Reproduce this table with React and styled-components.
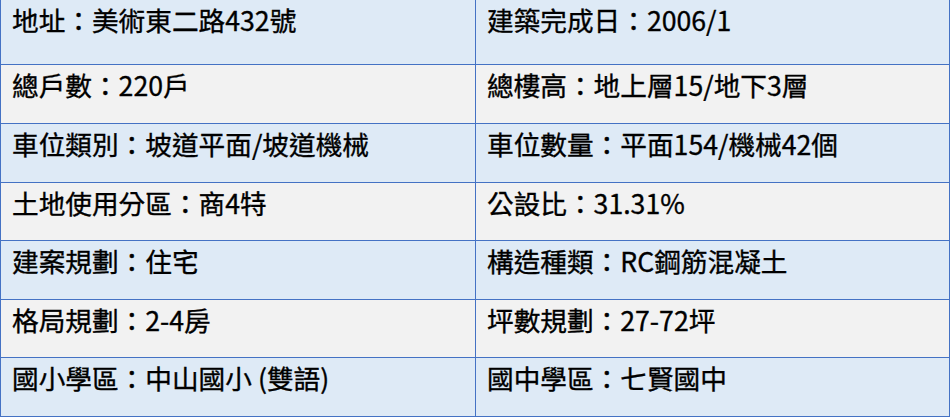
import styled, { createGlobalStyle } from "styled-components";

const GlobalStyle = createGlobalStyle`
    html, body {
        margin: 0;
        padding: 0;
        background: #ffffff;
    }
    body {
        font-family: "Noto Sans CJK TC", "Noto Sans", sans-serif;
    }
`;

const rows = [
    { h: 64, left: "地址：美術東二路432號", right: "建築完成日：2006/1" },
    { h: 58, left: "總戶數：220戶", right: "總樓高：地上層15/地下3層" },
    { h: 58, left: "車位類別：坡道平面/坡道機械", right: "車位數量：平面154/機械42個" },
    { h: 57, left: "土地使用分區：商4特", right: "公設比：31.31%" },
    { h: 58, left: "建案規劃：住宅", right: "構造種類：RC鋼筋混凝土" },
    { h: 57, left: "格局規劃：2-4房", right: "坪數規劃：27-72坪" },
    { h: 58, left: "國小學區：中山國小 (雙語)", right: "國中學區：七賢國中" },
];

export default function App() {
    return (
        <>
            <GlobalStyle />
            <Table>
                {rows.map((row, i) => (
                    <Row key={i} $h={row.h} $alt={i % 2 === 1}>
                        <Cell $divider>{row.left}</Cell>
                        <Cell>{row.right}</Cell>
                    </Row>
                ))}
            </Table>
        </>
    );
}

const Table = styled.div`
    width: 950px;
    box-sizing: border-box;
    border-left: 1px solid #4472c4;
    border-right: 1px solid #4472c4;
    display: flex;
    flex-direction: column;
`;

const Row = styled.div`
    display: grid;
    grid-template-columns: 475px 1fr;
    height: ${(p) => p.$h}px;
    border-bottom: 1px solid #4472c4;
    background-color: ${(p) => (p.$alt ? "#f2f2f2" : "#deeaf6")};
`;

const Cell = styled.div`
    box-sizing: border-box;
    padding: 1px 0 0 11px;
    border-right: ${(p) => (p.$divider ? "1px solid #4472c4" : "none")};
    font-size: 26.67px;
    line-height: 38px;
    color: #000000;
    white-space: nowrap;
    -webkit-text-stroke: 0.35px #000000;
`;
